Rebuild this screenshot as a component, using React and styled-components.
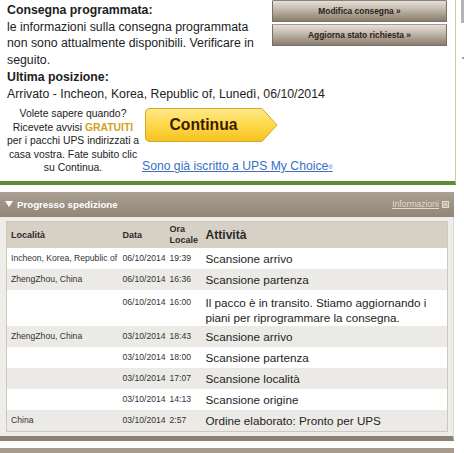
import React from 'react';
import styled, { createGlobalStyle } from 'styled-components';

const GlobalStyle = createGlobalStyle`
    html, body {
        margin: 0;
        padding: 0;
        background: #ffffff;
        font-family: 'Liberation Sans', Arial, sans-serif;
        color: #222;
    }
`;

const Page = styled.div`
    display: flex;
    flex-direction: row;
    width: 464px;
    height: 453px;
    overflow: hidden;
`;

const Main = styled.div`
    width: 456px;
    flex: none;
    display: flex;
    flex-direction: column;
`;

const SideStrip = styled.div`
    flex: 1;
    display: flex;
    flex-direction: column;
    align-items: flex-end;
`;

const SideTab = styled.div`
    width: 3px;
    height: 23px;
    background: #b4b4b2;
`;

const SideDot = styled.div`
    width: 2px;
    height: 2px;
    margin-top: 34px;
    background: #a0a09e;
`;

const Summary = styled.div`
    box-sizing: border-box;
    width: 456px;
    padding: 0 8px 6px 7px;
    border-right: 1px solid #b9d5a2;
    border-bottom: 4px solid #5d8d33;
`;

const TopRow = styled.div`
    display: flex;
    flex-direction: row;
    align-items: flex-start;
`;

const Info = styled.div`
    width: 258px;
    padding-top: 2px;
`;

const Title = styled.div`
    font-size: 12.3px;
    font-weight: bold;
    line-height: 16.7px;
    color: #1d1d1d;
`;

const Body = styled.div`
    font-size: 12.3px;
    line-height: 16.7px;
    color: #1d1d1d;
    white-space: ${props => props.$nowrap ? 'nowrap' : 'normal'};
`;

const Actions = styled.div`
    margin-left: 7px;
    width: 175px;
    display: flex;
    flex-direction: column;
    gap: 2px;
`;

const ActionButton = styled.button`
    box-sizing: border-box;
    width: 100%;
    height: 22px;
    margin: 0;
    padding: 0;
    border: 1px solid #7a6e60;
    border-top-color: ${props => props.$cut ? 'transparent' : '#a49a8d'};
    background: linear-gradient(to bottom, #e4dfd8 0%, #c9c0b5 35%, #a69a8c 70%, #8a7e70 100%);
    font-family: 'Liberation Sans', Arial, sans-serif;
    font-size: 8.4px;
    font-weight: bold;
    color: #2b2217;
    cursor: pointer;
`;

const Promo = styled.div`
    display: flex;
    flex-direction: row;
    align-items: flex-start;
    margin-top: 5px;
`;

const PromoText = styled.div`
    width: 136px;
    margin-left: -2px;
    text-align: center;
    font-size: 10.4px;
    line-height: 13.5px;
    color: #222;
`;

const Free = styled.span`
    font-weight: bold;
    color: #d39f22;
`;

const PromoCta = styled.div`
    margin-left: 1px;
    display: flex;
    flex-direction: column;
    align-items: flex-start;
`;

const ContinueButton = styled.button`
    position: relative;
    width: 133px;
    height: 34px;
    margin: 1px 0 0 3px;
    padding: 0 16px 0 0;
    border: none;
    background: transparent;
    font-family: 'Liberation Sans', Arial, sans-serif;
    font-size: 15.7px;
    font-weight: bold;
    color: #3a1c05;
    cursor: pointer;
`;

const ContinueShape = styled.svg`
    position: absolute;
    left: 0;
    top: 0;
    z-index: 0;
`;

const ContinueLabel = styled.span`
    position: relative;
    z-index: 1;
`;

const MyChoiceLink = styled.a`
    margin-top: 17px;
    font-size: 12.2px;
    line-height: 14px;
    color: #3b6fc6;
    text-decoration: underline;
    cursor: pointer;
`;

const Registered = styled.span`
    font-size: 6px;
    vertical-align: 1px;
`;

const Progress = styled.div`
    width: 454px;
    margin-top: 7px;
`;

const ProgressHeader = styled.div`
    box-sizing: border-box;
    height: 25px;
    padding: 0 5px;
    display: flex;
    flex-direction: row;
    align-items: center;
    justify-content: space-between;
    background: linear-gradient(to bottom, #aba194 0%, #9b8f81 60%, #928676 100%);
`;

const ProgressTitle = styled.div`
    display: flex;
    align-items: center;
    gap: 4px;
    font-size: 9.7px;
    font-weight: bold;
    color: #ffffff;
`;

const InfoLink = styled.a`
    display: flex;
    align-items: center;
    gap: 3px;
    font-size: 8.6px;
    color: #e2dcd3;
    text-decoration: underline;
    cursor: pointer;
`;

const ProgressBody = styled.div`
    box-sizing: border-box;
    padding: 4px 5px 4px 6px;
    background: #efedea;
    border-right: 1px solid #dcd8d2;
    border-bottom: 5px solid #8c8272;
`;

const Table = styled.table`
    width: 442px;
    border-collapse: collapse;
    table-layout: fixed;
    border: 1px solid #cdc7bd;
`;

const HeadRow = styled.tr`
    height: 27px;
    background: #d7d0c5;
`;

const HeadCell = styled.th`
    padding: 0 4px;
    text-align: left;
    vertical-align: middle;
    font-size: ${props => props.$big ? '12.1px' : '9px'};
    line-height: ${props => props.$big ? '14px' : '10.5px'};
    font-weight: bold;
    color: #2a2a2a;
`;

const Row = styled.tr`
    background: ${props => props.$shaded ? '#ebeae6' : '#ffffff'};
`;

const Cell = styled.td`
    padding: ${props => props.$tall ? '5px 4px 1px' : '3px 4px'};
    vertical-align: top;
    font-size: 8.6px;
    line-height: 15px;
    color: #333;
    white-space: nowrap;
    overflow: hidden;
`;

const ActivityCell = styled.td`
    padding: ${props => props.$tall ? '5px 4px 1px' : '3px 4px'};
    vertical-align: top;
    font-size: 11.7px;
    line-height: 15px;
    color: #1e1e1e;
`;

const NextHeader = styled.div`
    width: 454px;
    height: 8px;
    margin-top: 7px;
    background: #a79c8e;
`;

const events = [
    { place: 'Incheon, Korea, Republic of', date: '06/10/2014', time: '19:39', activity: 'Scansione arrivo' },
    { place: 'ZhengZhou, China', date: '06/10/2014', time: '16:36', activity: 'Scansione partenza' },
    { place: '', date: '06/10/2014', time: '16:00', activity: 'Il pacco è in transito. Stiamo aggiornando i piani per riprogrammare la consegna.', tall: true },
    { place: 'ZhengZhou, China', date: '03/10/2014', time: '18:43', activity: 'Scansione arrivo' },
    { place: '', date: '03/10/2014', time: '18:00', activity: 'Scansione partenza' },
    { place: '', date: '03/10/2014', time: '17:07', activity: 'Scansione località' },
    { place: '', date: '03/10/2014', time: '14:13', activity: 'Scansione origine' },
    { place: 'China', date: '03/10/2014', time: '2:57', activity: 'Ordine elaborato: Pronto per UPS' },
];

const App = () => {
    return (
        <Page>
            <GlobalStyle />
            <Main>
                <Summary>
                    <TopRow>
                        <Info>
                            <Title>Consegna programmata:</Title>
                            <Body>le informazioni sulla consegna programmata non sono attualmente disponibili. Verificare in seguito.</Body>
                        </Info>
                        <Actions>
                            <ActionButton $cut>Modifica consegna »</ActionButton>
                            <ActionButton>Aggiorna stato richiesta »</ActionButton>
                        </Actions>
                    </TopRow>
                    <Title>Ultima posizione:</Title>
                    <Body $nowrap>Arrivato - Incheon, Korea, Republic of, Lunedì, 06/10/2014</Body>
                    <Promo>
                        <PromoText>
                            Volete sapere quando?<br />
                            Ricevete avvisi <Free>GRATUITI</Free><br />
                            per i pacchi UPS indirizzati a<br />
                            casa vostra. Fate subito clic<br />
                            su Continua.
                        </PromoText>
                        <PromoCta>
                            <ContinueButton>
                                <ContinueShape width="133" height="34" viewBox="0 0 133 34">
                                    <defs>
                                        <linearGradient id="cta" x1="0" y1="0" x2="0" y2="1">
                                            <stop offset="0" stopColor="#ffe98a" />
                                            <stop offset="0.5" stopColor="#fdd84a" />
                                            <stop offset="1" stopColor="#f5c21f" />
                                        </linearGradient>
                                    </defs>
                                    <path d="M5 0.5 H117 L132 17 L117 33.5 H5 Q0.5 33.5 0.5 29 V5 Q0.5 0.5 5 0.5 Z" fill="url(#cta)" stroke="#d6a52a" strokeWidth="1" />
                                </ContinueShape>
                                <ContinueLabel>Continua</ContinueLabel>
                            </ContinueButton>
                            <MyChoiceLink>Sono già iscritto a UPS My Choice<Registered>®</Registered></MyChoiceLink>
                        </PromoCta>
                    </Promo>
                </Summary>
                <Progress>
                    <ProgressHeader>
                        <ProgressTitle>
                            <svg width="8" height="6" viewBox="0 0 8 6">
                                <path d="M0 0 H8 L4 6 Z" fill="#ffffff" />
                            </svg>
                            Progresso spedizione
                        </ProgressTitle>
                        <InfoLink>
                            Informazioni
                            <svg width="7" height="7" viewBox="0 0 7 7">
                                <rect x="0.5" y="0.5" width="6" height="6" fill="#b9afa2" stroke="#e2dcd3" strokeWidth="1" />
                                <path d="M2 4.5 L3.5 2.5 L5 4.5" fill="none" stroke="#f4f0ea" strokeWidth="0.9" />
                            </svg>
                        </InfoLink>
                    </ProgressHeader>
                    <ProgressBody>
                        <Table>
                            <colgroup>
                                <col style={{ width: '112px' }} />
                                <col style={{ width: '47px' }} />
                                <col style={{ width: '36px' }} />
                                <col />
                            </colgroup>
                            <thead>
                                <HeadRow>
                                    <HeadCell>Località</HeadCell>
                                    <HeadCell>Data</HeadCell>
                                    <HeadCell>Ora<br />Locale</HeadCell>
                                    <HeadCell $big>Attività</HeadCell>
                                </HeadRow>
                            </thead>
                            <tbody>
                                {events.map((e, i) => (
                                    <Row key={i} $shaded={i % 2 === 1}>
                                        <Cell $tall={e.tall}>{e.place}</Cell>
                                        <Cell $tall={e.tall}>{e.date}</Cell>
                                        <Cell $tall={e.tall}>{e.time}</Cell>
                                        <ActivityCell $tall={e.tall}>{e.activity}</ActivityCell>
                                    </Row>
                                ))}
                            </tbody>
                        </Table>
                    </ProgressBody>
                </Progress>
                <NextHeader />
            </Main>
            <SideStrip>
                <SideTab />
                <SideDot />
            </SideStrip>
        </Page>
    );
};

export default App;
